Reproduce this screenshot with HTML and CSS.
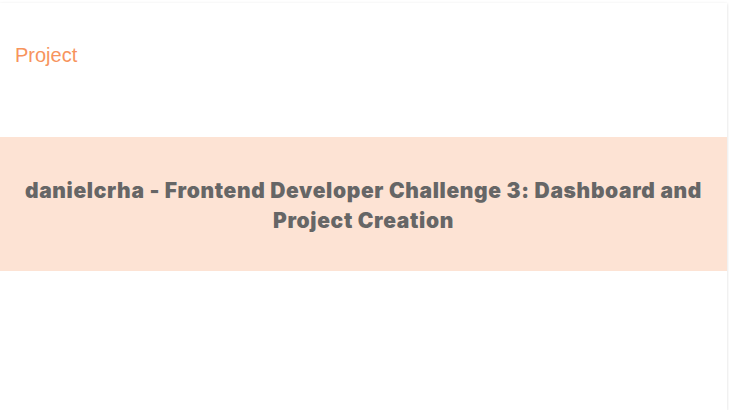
FILE: index.html
```html
<!DOCTYPE html>
<html>
<head>
<meta charset="utf-8">
<link rel="stylesheet" href="styles.css">
</head>
<body>
<div class="card">
  <div class="head"><span class="label">Project</span></div>
  <div class="band">
    <h2 class="title">danielcrha - Frontend Developer Challenge 3: Dashboard and Project Creation</h2>
  </div>
  <div class="foot"></div>
</div>
</body>
</html>
```
FILE: styles.css
```css
html, body { margin: 0; padding: 0; background: #ffffff; }
.card {
  width: 727px;
  height: 407px;
  margin-top: 3px;
  background: #fff;
  box-shadow: 0 1px 3px rgba(0,0,0,0.15);
  display: flex;
  flex-direction: column;
  overflow: hidden;
}
.head {
  height: 134px;
  padding: 41px 15px 0;
  box-sizing: border-box;
}
.label {
  font-family: "Liberation Sans", Arial, sans-serif;
  font-size: 20px;
  color: #f7945d;
}
.band {
  height: 134px;
  box-sizing: border-box;
  background: #fde3d4;
  display: flex;
  align-items: center;
  justify-content: center;
  padding: 4px 10px 0;
}
.title {
  margin: 0;
  font-family: Inter, sans-serif;
  font-weight: 900;
  font-size: 21px;
  line-height: 30px;
  color: #666666;
  text-align: center;
  letter-spacing: 0.65px;
}
.foot { flex: 1; }
```
